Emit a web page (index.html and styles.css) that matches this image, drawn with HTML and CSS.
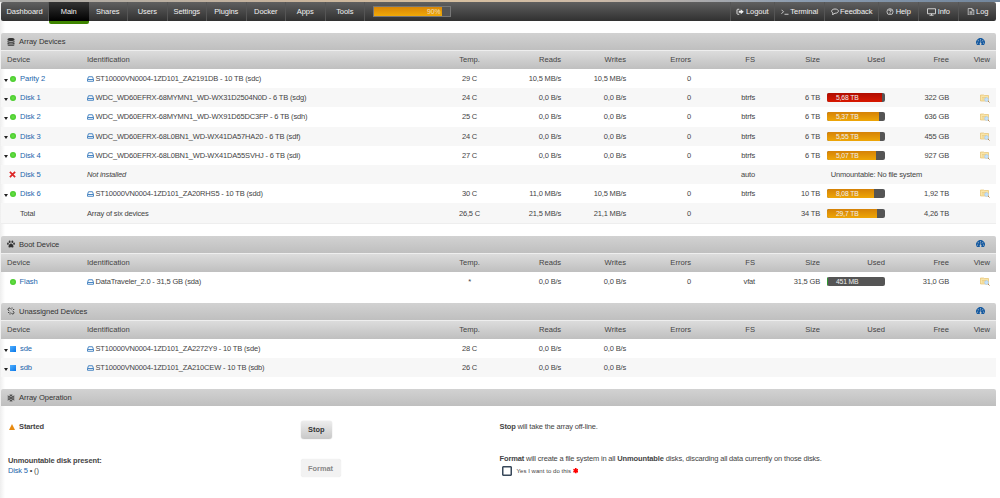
FILE: index.html
```
<!DOCTYPE html>
<html lang="en">
<head>
    <meta charset="UTF-8">
    <meta name="viewport" content="width=device-width, initial-scale=1.0">
    <title>Tower/Main</title>
    <link rel="stylesheet" href="styles.css">
</head>
<body>
    <!-- Icon set -->
    <svg class="icon-set" width="0" height="0">
        <symbol id="i-disk" viewBox="0 0 14 12"><path d="M1 7 3 1.5h8L13 7v3.5H1zM1 7h12" fill="none" stroke="#3f7fc0" stroke-width="1.9" stroke-linejoin="round"/></symbol>
        <symbol id="i-db" viewBox="0 0 14 16"><path d="M0 2.5C0 -.8 14-.8 14 2.5v1.5C14 6.5 0 6.5 0 4zM0 6c2 2 12 2 14 0v2c-1 2.3-13 2.3-14 0zM0 9.7c2 2 12 2 14 0v1.8c-1 2.3-13 2.3-14 0zM0 13c2 1.8 12 1.8 14 0v1c-1 2.5-13 2.5-14 0z"/></symbol>
        <symbol id="i-paw" viewBox="0 0 16 15"><ellipse cx="5.3" cy="3" rx="1.9" ry="2.7"/><ellipse cx="10.7" cy="3" rx="1.9" ry="2.7"/><ellipse cx="1.9" cy="7" rx="1.8" ry="2.3"/><ellipse cx="14.1" cy="7" rx="1.8" ry="2.3"/><path d="M8 6.5c2.5 0 5 3.7 5 6 0 3-3.3 1.5-5 1.5s-5 1.5-5-1.5c0-2.3 2.5-6 5-6z"/></symbol>
        <symbol id="i-unlink" viewBox="0 0 16 16"><path d="M8.500 5 6 2.500C4 .5.500 4 2.500 6L5 8.500M7.500 11l2.500 2.500c2 2 5.500-1.500 3.500-3.500L11 7.500M10 3.500V1M12 5h2.500M2 11h2.500M6 12.500V15" fill="none" stroke="#333" stroke-width="1.8"/></symbol>
        <symbol id="i-flake" viewBox="0 0 16 16"><path d="M8 0v16M1 4l14 8M15 4 1 12M5.5 1.5 8 4l2.5-2.5M5.5 14.5 8 12l2.5 2.5M1.5 7 5 6.3 4 3M14.5 9l-3.5.7 1 3.3M14.5 7 11 6.3 12 3M1.5 9l3.5.7L4 13" fill="none" stroke="#333" stroke-width="1.4"/></symbol>
        <symbol id="i-gauge" viewBox="0 0 18 14"><path d="M2 13a8.7 8.7 0 1 1 14 0z" fill="#1459a0"/><g fill="#ccc"><circle cx="9" cy="2.7" r="1.1"/><circle cx="4.5" cy="4.5" r="1.1"/><circle cx="13.5" cy="4.5" r="1.1"/><circle cx="2.8" cy="9" r="1.1"/><circle cx="15.2" cy="9" r="1.1"/><path d="M9.5 5h1l-.6 4A2 2 0 1 1 8.5 9z"/></g></symbol>
        <symbol id="i-view" viewBox="0 0 20 18"><path d="M1 2h6l1.5 1H17v11H1z" fill="#f9e5a8" stroke="#e3bd68" stroke-width="1.3"/><path d="M4 7h9M4 10h5" stroke="#dfbd70"/><path d="m15 13 4 4" stroke="#b58b5a" stroke-width="2"/><circle cx="13" cy="11" r="3.8" fill="#c5e1fa" stroke="#9cc3e8"/></symbol>
        <symbol id="i-logout" viewBox="0 0 16 14"><path d="M6.5 2H3.5Q2 2 2 3.5v7Q2 12 3.5 12h3" fill="none" stroke="#eee" stroke-width="1.8"/><path d="M5.5 5h4V2l6 5-6 5V9h-4z" fill="#eee"/></symbol>
        <symbol id="i-term" viewBox="0 0 16 14"><path d="m1 3 4 4-4 4M7 12h8" fill="none" stroke="#eee" stroke-width="1.6"/></symbol>
        <symbol id="i-talk" viewBox="0 0 16 14"><path d="M8 1.5c9 0 9 8.5 0 8.5L3 13l1-3.5C-1 7 1 1.5 8 1.5z" fill="none" stroke="#eee" stroke-width="1.6"/></symbol>
        <symbol id="i-help" viewBox="0 0 16 16"><circle cx="8" cy="8" r="6.5" fill="none" stroke="#eee" stroke-width="1.5"/><path d="M5.5 6c.5-3 5-2.5 5 0C10.5 8 8 7.5 8 9.5M8 11v1.7" fill="none" stroke="#eee" stroke-width="1.9"/></symbol>
        <symbol id="i-info" viewBox="0 0 18 16"><path d="M1 1.5h16v10H1zM5 14.5h8M9 11.5v3" fill="none" stroke="#eee" stroke-width="1.6"/></symbol>
        <symbol id="i-log" viewBox="0 0 14 16"><path d="M1 1h8l4 4v10H1zM9 1v4h4M4 8h6M4 10h6M4 12.5h6" fill="none" stroke="#eee" stroke-width="1.4"/></symbol>
        <symbol id="i-cross" viewBox="0 0 12 12"><path d="m1.5 1.5 9 9M10.5 1.5l-9 9" stroke="#dd2727" stroke-width="3"/></symbol>
        <symbol id="i-required" viewBox="0 0 12 12"><path d="M6 0v12M.8 3l10.4 6M11.2 3 .8 9" stroke="#f00" stroke-width="3.6"/></symbol>
    </svg>

    <div class="banner"></div>

    <!-- Menu -->
    <div class="menu">
        <div class="nav">
            <a>Dashboard</a><a class="active">Main</a><a>Shares</a><a>Users</a><a>Settings</a><a>Plugins</a><a>Docker</a><a>Apps</a><a>Tools</a>
        </div>
        <div class="load"><span style="width:90%">90%</span></div>
        <div class="tools">
            <a class="w-logout"><svg><use href="#i-logout"/></svg>Logout</a>
            <a class="w-term"><svg><use href="#i-term"/></svg>Terminal</a>
            <a class="w-talk"><svg><use href="#i-talk"/></svg>Feedback</a>
            <a class="w-help"><svg><use href="#i-help"/></svg>Help</a>
            <a class="w-info"><svg class="wide"><use href="#i-info"/></svg>Info</a>
            <a class="w-log"><svg><use href="#i-log"/></svg>Log</a>
        </div>
    </div>

    <!-- Array Devices -->
    <div class="section">
        <div class="title"><svg><use href="#i-db"/></svg>Array Devices<svg class="gauge"><use href="#i-gauge"/></svg></div>
        <div class="row head"><span>Device</span><span>Identification</span><span class="mid">Temp.</span><span>Reads</span><span>Writes</span><span>Errors</span><span>FS</span><span>Size</span><span>Used</span><span>Free</span><span>View</span></div>
        <div class="row"><span class="dev"><i class="caret"></i><i class="orb"></i><a>Parity 2</a></span><span><svg class="disk"><use href="#i-disk"/></svg>ST10000VN0004-1ZD101_ZA2191DB - 10 TB (sdc)</span><span class="mid">29 C</span><span>10,5 MB/s</span><span>10,5 MB/s</span><span>0</span></div>
        <div class="row"><span class="dev"><i class="caret"></i><i class="orb"></i><a>Disk 1</a></span><span><svg class="disk"><use href="#i-disk"/></svg>WDC_WD60EFRX-68MYMN1_WD-WX31D2504N0D - 6 TB (sdg)</span><span class="mid">24 C</span><span>0,0 B/s</span><span>0,0 B/s</span><span>0</span><span>btrfs</span><span>6 TB</span><span class="used"><b class="red" style="width:95%"></b><em>5,68 TB</em></span><span>322 GB</span><span><svg class="view"><use href="#i-view"/></svg></span></div>
        <div class="row"><span class="dev"><i class="caret"></i><i class="orb"></i><a>Disk 2</a></span><span><svg class="disk"><use href="#i-disk"/></svg>WDC_WD60EFRX-68MYMN1_WD-WX91D65DC3FP - 6 TB (sdh)</span><span class="mid">25 C</span><span>0,0 B/s</span><span>0,0 B/s</span><span>0</span><span>btrfs</span><span>6 TB</span><span class="used"><b style="width:89%"></b><em>5,37 TB</em></span><span>636 GB</span><span><svg class="view"><use href="#i-view"/></svg></span></div>
        <div class="row"><span class="dev"><i class="caret"></i><i class="orb"></i><a>Disk 3</a></span><span><svg class="disk"><use href="#i-disk"/></svg>WDC_WD60EFRX-68L0BN1_WD-WX41DA57HA20 - 6 TB (sdf)</span><span class="mid">24 C</span><span>0,0 B/s</span><span>0,0 B/s</span><span>0</span><span>btrfs</span><span>6 TB</span><span class="used"><b style="width:92%"></b><em>5,55 TB</em></span><span>455 GB</span><span><svg class="view"><use href="#i-view"/></svg></span></div>
        <div class="row"><span class="dev"><i class="caret"></i><i class="orb"></i><a>Disk 4</a></span><span><svg class="disk"><use href="#i-disk"/></svg>WDC_WD60EFRX-68L0BN1_WD-WX41DA55SVHJ - 6 TB (sdi)</span><span class="mid">27 C</span><span>0,0 B/s</span><span>0,0 B/s</span><span>0</span><span>btrfs</span><span>6 TB</span><span class="used"><b style="width:85%"></b><em>5,07 TB</em></span><span>927 GB</span><span><svg class="view"><use href="#i-view"/></svg></span></div>
        <div class="row"><span class="dev"><svg class="cross"><use href="#i-cross"/></svg><a>Disk 5</a></span><span><em>Not installed</em></span><span></span><span></span><span></span><span></span><span>auto</span><span class="unmountable">Unmountable: No file system</span></div>
        <div class="row"><span class="dev"><i class="caret"></i><i class="orb"></i><a>Disk 6</a></span><span><svg class="disk"><use href="#i-disk"/></svg>ST10000VN0004-1ZD101_ZA20RHS5 - 10 TB (sdd)</span><span class="mid">30 C</span><span>11,0 MB/s</span><span>10,5 MB/s</span><span>0</span><span>btrfs</span><span>10 TB</span><span class="used"><b style="width:81%"></b><em>8,08 TB</em></span><span>1,92 TB</span><span><svg class="view"><use href="#i-view"/></svg></span></div>
        <div class="row total"><span class="dev">Total</span><span>Array of six devices</span><span class="mid">26,5 C</span><span>21,5 MB/s</span><span>21,1 MB/s</span><span>0</span><span></span><span>34 TB</span><span class="used"><b style="width:87%"></b><em>29,7 TB</em></span><span>4,26 TB</span></div>
    </div>

    <!-- Boot Device -->
    <div class="section boot">
        <div class="title"><svg><use href="#i-paw"/></svg>Boot Device<svg class="gauge"><use href="#i-gauge"/></svg></div>
        <div class="row head"><span>Device</span><span>Identification</span><span class="mid">Temp.</span><span>Reads</span><span>Writes</span><span>Errors</span><span>FS</span><span>Size</span><span>Used</span><span>Free</span><span>View</span></div>
        <div class="row"><span class="dev"><i class="orb alone"></i><a>Flash</a></span><span><svg class="disk"><use href="#i-disk"/></svg>DataTraveler_2.0 - 31,5 GB (sda)</span><span class="mid">*</span><span>0,0 B/s</span><span>0,0 B/s</span><span>0</span><span>vfat</span><span>31,5 GB</span><span class="used"><b class="green" style="width:1.5%"></b><em>451 MB</em></span><span>31,0 GB</span><span><svg class="view"><use href="#i-view"/></svg></span></div>
    </div>

    <!-- Unassigned Devices -->
    <div class="section">
        <div class="title"><svg><use href="#i-unlink"/></svg>Unassigned Devices<svg class="gauge"><use href="#i-gauge"/></svg></div>
        <div class="row head"><span>Device</span><span>Identification</span><span class="mid">Temp.</span><span>Reads</span><span>Writes</span><span>Errors</span><span>FS</span><span>Size</span><span>Used</span><span>Free</span><span>View</span></div>
        <div class="row"><span class="dev"><i class="caret"></i><i class="square"></i><a>sde</a></span><span><svg class="disk"><use href="#i-disk"/></svg>ST10000VN0004-1ZD101_ZA2272Y9 - 10 TB (sde)</span><span class="mid">28 C</span><span>0,0 B/s</span><span>0,0 B/s</span></div>
        <div class="row"><span class="dev"><i class="caret"></i><i class="square"></i><a>sdb</a></span><span><svg class="disk"><use href="#i-disk"/></svg>ST10000VN0004-1ZD101_ZA210CEW - 10 TB (sdb)</span><span class="mid">26 C</span><span>0,0 B/s</span><span>0,0 B/s</span></div>
    </div>

    <!-- Array Operation -->
    <div class="section">
        <div class="title"><svg><use href="#i-flake"/></svg>Array Operation</div>
        <div class="operation">
            <div class="started"><i class="warn"></i><b>Started</b></div>
            <div><button>Stop</button></div>
            <div><b>Stop</b> will take the array off-line.</div>
        </div>
        <div class="operation format">
            <div class="present"><b>Unmountable disk present:</b><br><a>Disk 5</a> • ()</div>
            <div><button disabled>Format</button></div>
            <div><b>Format</b> will create a file system in all <b>Unmountable</b> disks, discarding all data currently on those disks.
                <label><i class="check"></i>Yes I want to do this <svg class="required"><use href="#i-required"/></svg></label>
            </div>
        </div>
    </div>
</body>
</html>
```
FILE: styles.css
```
* {
    box-sizing: border-box;
}
body {
    margin: 0;
    height: 498px;
    overflow: hidden;
    padding: 0 4px 0 1px;
    background: linear-gradient(90deg, #eee, #fff 5px);
    color: #444;
    font-family: "Liberation Sans", Arial, sans-serif;
    font-size: 7.5px;
    letter-spacing: -0.17px;
}
.icon-set {
    position: absolute;
}
a {
    color: #1c65ab;
}
.banner {
    height: 2px;
    margin: 0 -4px 0 -1px;
    background: linear-gradient(90deg, #a9a9a7, #c9b49c 30%, #d8c0a0 45%, #cbb9a8 60%, #8b9cb0 80%, #72869c);
}

/* Menu */
.menu {
    display: flex;
    height: 19px;
    background: linear-gradient(#606060, #303030);
    border-radius: 2px;
    font-size: 7.5px;
    letter-spacing: -0.07px;
    line-height: 19px;
}
.menu a {
    color: #f0f0f0;
}
.nav {
    display: flex;
}
.nav a {
    width: 39.5px;
    text-align: center;
    border-right: 1px solid #555;
}
.nav a:first-child {
    width: 48px;
}
.nav .active {
    height: 22px;
    background: linear-gradient(#333, #000 19px, #3f8500 19px);
    border-right: 0;
    border-radius: 0 0 2px 2px;
}
.load {
    width: 78px;
    height: 11px;
    margin: 4px 0 0 8px;
    border: 1px solid #777;
    background: #555;
    line-height: 10px;
}
.load span {
    display: block;
    height: 9px;
    padding-right: 2px;
    background: linear-gradient(#d98606, #f0a908);
    color: #f0e0c0;
    font-size: 6.8px;
    text-align: right;
}
.tools {
    display: flex;
    margin-left: auto;
}
.tools a {
    display: flex;
    align-items: center;
    justify-content: center;
    gap: 1.5px;
    border-left: 1px solid #555;
}
.tools svg {
    width: 8px;
    height: 7.5px;
}
.tools .wide {
    width: 9px;
    height: 8px;
}
.w-logout { width: 44px; }
.w-term { width: 50px; }
.w-talk { width: 54px; }
.w-help { width: 40px; }
.w-info { width: 40px; }
.w-log { width: 38px; }

/* Device tables */
.section {
    margin-top: 12px;
}
.title {
    display: flex;
    align-items: center;
    height: 17px;
    padding: 0 11px 0 6px;
    background: linear-gradient(#d2d2d2, #bfbfbf);
    border-radius: 2px 2px 0 0;
    color: #333;
    font-size: 7.6px;
    letter-spacing: -0.06px;
}
.title svg {
    width: 8px;
    height: 8px;
    margin-right: 4px;
    fill: #333;
}
.title .gauge {
    width: 9px;
    height: 8px;
    margin: 0 0 0 auto;
}
.row {
    display: grid;
    grid-template-columns: 80px 350px 65px 59px 65px 65px 64px 65px 65px 64px 41px;
    align-items: center;
    height: 19.2px;
    padding-left: 6px;
    text-align: right;
    white-space: nowrap;
}
.row:nth-child(even) {
    background: #f7f7f7;
}
.row span:nth-child(-n+2) {
    text-align: left;
}
.row .mid {
    text-align: center;
}
.row.head {
    height: 19px;
    padding-bottom: 1px;
    border-top: 1px solid #eee;
    background: linear-gradient(#dcdcdc, #bfbfbf);
    font-size: 7.6px;
    letter-spacing: 0;
}
.row.total {
    height: 20.6px;
    border-bottom: 1px solid #eee;
}
.total .dev {
    padding-left: 13px;
}
.dev {
    display: flex;
    align-items: center;
}
.dev a {
    font-size: 7.6px;
    letter-spacing: -0.08px;
}
.caret {
    margin: 3px 2px 0 -3px;
    border: 2px solid transparent;
    border-top: 3px solid #222;
    border-bottom: 0;
}
.orb {
    width: 6px;
    height: 6px;
    margin-right: 4px;
    border-radius: 50%;
    background: radial-gradient(#6be04a, #35c21a);
}
.orb.alone {
    margin-left: 2.5px;
}
.square {
    width: 6px;
    height: 6px;
    margin-right: 4px;
    background: linear-gradient(135deg, #51b0ff, #0a77e8);
}
.cross {
    width: 7px;
    height: 7px;
    margin: 0 4px 0 2px;
}
.disk {
    width: 7px;
    height: 6px;
    margin-right: 1.5px;
    vertical-align: -0.5px;
}
.view {
    width: 10px;
    height: 9px;
    vertical-align: middle;
}
.used {
    display: grid;
    align-items: center;
    width: 58px;
    height: 9px;
    justify-self: end;
    border-radius: 2px;
    background: #555;
    overflow: hidden;
}
.used b, .used em {
    grid-area: 1 / 1;
}
.used b {
    height: 9px;
    background: linear-gradient(#d58207, #eea607);
}
.used .red {
    background: linear-gradient(#b00c00, #d81800);
}
.used .green {
    background: #2e9c2e;
}
.used em {
    padding-left: 9px;
    color: #eee;
    font-size: 6.8px;
    font-style: normal;
    text-align: left;
}
.unmountable {
    grid-column: 8 / 11;
    padding-right: 27px;
}
.boot {
    height: 55px;
}

/* Array Operation */
.operation {
    display: grid;
    grid-template-columns: 292.5px 199px 1fr;
    height: 37.5px;
    margin-top: 15.5px;
    padding-left: 7px;
    line-height: 10px;
}
.operation b {
    letter-spacing: -0.12px;
}
.format {
    height: 40px;
    margin-top: -5px;
}
.operation button {
    margin-top: -1px;
}
.format button {
    margin-top: 5px;
}
.started {
    display: flex;
    height: 10px;
    align-items: center;
}
.warn {
    margin: 0 4px 0 1px;
    border: 3.5px solid transparent;
    border-top: 0;
    border-bottom: 6px solid #e88a10;
}
.present {
    padding-top: 1.5px;
}
button {
    height: 18px;
    padding: 0 7.5px;
    border: 0;
    border-radius: 3px;
    background: linear-gradient(#ededed, #c8c8c8);
    box-shadow: 0 0 1px #aaa;
    color: #333;
    font: bold 7.4px "Liberation Sans", Arial, sans-serif;
}
button:disabled {
    background: #f2f2f2;
    box-shadow: 0 0 1px #ddd;
    color: #888;
}
label {
    display: flex;
    align-items: center;
    margin: 1.5px 0 0 2px;
    font-size: 6px;
    letter-spacing: 0.05px;
}
.check {
    width: 10px;
    height: 10px;
    margin-right: 5px;
    border: 1px solid #38485a;
    border-radius: 1px;
    box-shadow: inset 0 0 0 0.5px #38485a;
}
.required {
    width: 5.5px;
    height: 5.5px;
    margin-left: 1.5px;
}
```
